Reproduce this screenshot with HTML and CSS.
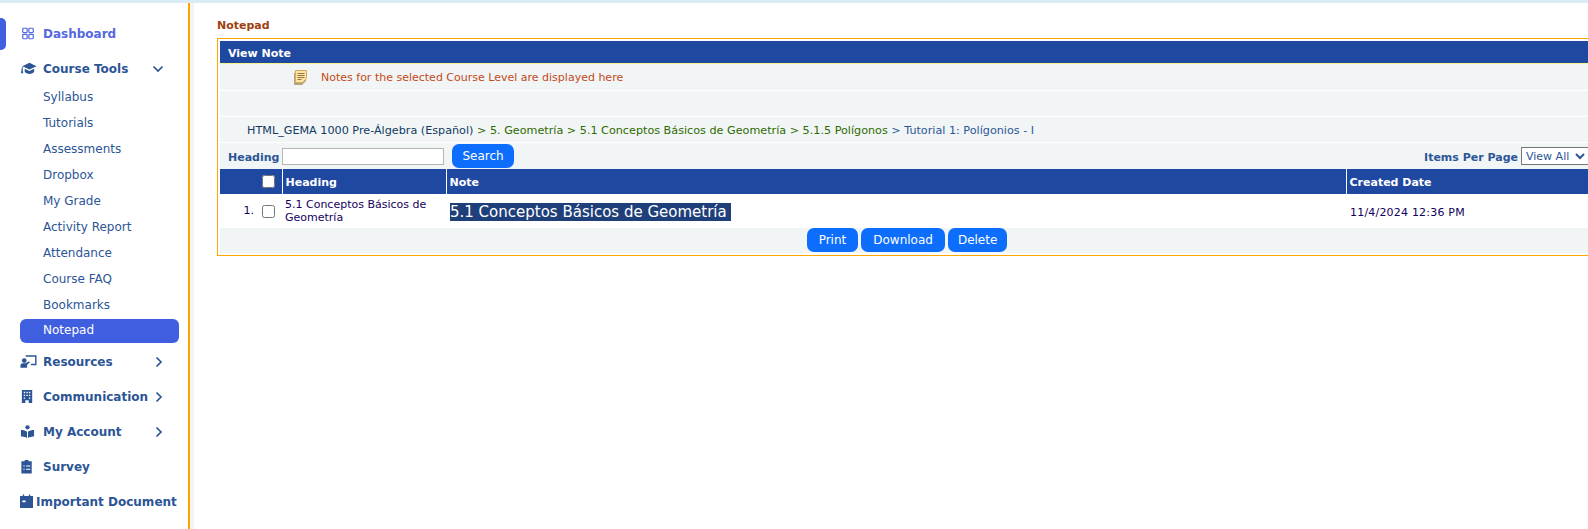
FILE: index.html
```html
<!DOCTYPE html>
<html lang="en">
<head>
  <meta charset="UTF-8">
  <meta name="viewport" content="width=device-width, initial-scale=1.0">
  <title>Notepad</title>
  <link rel="stylesheet" href="styles.css">
</head>
<body>
  <div class="top-strip"></div>
  <div class="layout">
    <nav class="sidebar">
      <span class="active-tab"></span>
      <a class="nav-item nav-dashboard">
        <svg class="nav-icon" viewBox="0 0 16 16"><g fill="none" stroke="#5468e0" stroke-width="1.4"><rect x="2" y="2" width="5" height="5" rx="1"/><rect x="9" y="2" width="5" height="5" rx="1"/><rect x="2" y="9" width="5" height="5" rx="1"/><rect x="9" y="9" width="5" height="5" rx="1"/></g></svg>
        <span>Dashboard</span>
      </a>
      <a class="nav-item nav-tools">
        <svg class="nav-icon cap-icon" viewBox="0 0 18 15"><path d="M10 1.500 17.500 5 10 8.500 3.800 5.600C3 6 2.700 6.700 2.600 7.500c.4.200.5.700.2 1l.6 4H1l.7-4c-.3-.3-.3-.8.100-1 .1-1.100.5-2 1.200-2.500L2.500 5z M5 7.800l5 2.300 5-2.300v3.200c-1 1.500-3 2.300-5 2.300s-4-.8-5-2.300z" fill="#2c5596"/></svg>
        <span>Course Tools</span>
        <svg class="chevron chevron-down" viewBox="0 0 12 12"><path d="M1.500 3.500 6 8l4.500-4.500" fill="none" stroke="#2c5596" stroke-width="1.700"/></svg>
      </a>
      <ul class="sub-menu">
        <li>Syllabus</li>
        <li>Tutorials</li>
        <li>Assessments</li>
        <li>Dropbox</li>
        <li>My Grade</li>
        <li>Activity Report</li>
        <li>Attendance</li>
        <li>Course FAQ</li>
        <li>Bookmarks</li>
        <li class="current">Notepad</li>
      </ul>
      <a class="nav-item nav-tight">
        <svg class="nav-icon wide-icon" viewBox="0 0 18 15"><path d="M6 1h11.500v10.500H11.500V10h4.500V2.500H6z" fill="#2c5596"/><circle cx="4.500" cy="6.500" r="2.500" fill="#2c5596"/><path d="M0.500 14v-2.500C.5 10 1.800 9.300 3 9.300h3l3.500-2 .9 1.300L7.500 11v3z" fill="#2c5596"/></svg>
        <span>Resources</span>
        <svg class="chevron" viewBox="0 0 12 12"><path d="M3.500 1.500 8 6l-4.500 4.500" fill="none" stroke="#2c5596" stroke-width="1.700"/></svg>
      </a>
      <a class="nav-item">
        <svg class="nav-icon" viewBox="0 0 16 16"><path fill-rule="evenodd" d="M2 1h11v14H9.300v-3H5.700v3H2z M4 3v1.500h1.500V3z M6.800 3v1.500h1.500V3z M9.500 3v1.500H11V3z M4 6v1.500h1.500V6z M6.800 6v1.500h1.500V6z M9.500 6v1.500H11V6z M4 9v1.500h1.500V9z M9.500 9v1.500H11V9z" fill="#2c5596"/></svg>
        <span>Communication</span>
        <svg class="chevron" viewBox="0 0 12 12"><path d="M3.500 1.500 8 6l-4.500 4.500" fill="none" stroke="#2c5596" stroke-width="1.700"/></svg>
      </a>
      <a class="nav-item">
        <svg class="nav-icon" viewBox="0 0 16 16"><circle cx="8" cy="3.500" r="2.300" fill="#2c5596"/><path d="M1 6.500c2.500 0 5 .5 6.500 1.800V15C6 13.800 3.500 13.300 1 13.300z M15 6.500c-2.500 0-5 .5-6.500 1.800V15c1.500-1.200 4-1.700 6.500-1.700z" fill="#2c5596"/></svg>
        <span>My Account</span>
        <svg class="chevron" viewBox="0 0 12 12"><path d="M3.500 1.500 8 6l-4.500 4.500" fill="none" stroke="#2c5596" stroke-width="1.700"/></svg>
      </a>
      <a class="nav-item">
        <svg class="nav-icon" viewBox="0 0 16 16"><path fill-rule="evenodd" d="M5 1h4v1.500h3.500v13h-11v-13H5z M3.500 7v1h1.500V7z M6.500 7v1h4.500V7z M3.500 10.500v1h1.500v-1z M6.500 10.500v1h4.500v-1z" fill="#2c5596"/></svg>
        <span>Survey</span>
      </a>
      <a class="nav-item nav-doc">
        <svg class="nav-icon" viewBox="0 0 14 16"><path fill-rule="evenodd" d="M3 .5h1.500V2h5V.5H11V2h3v13H0V2h3z M2.500 7v1.800h3.500V7z" fill="#2c5596"/></svg>
        <span>Important Document</span>
      </a>
    </nav>

    <main class="content">
      <div class="page-title">Notepad</div>
      <section class="panel">
        <div class="panel-head">View Note</div>
        <div class="info-row">
          <svg class="note-icon" viewBox="0 0 14 15"><path d="M1 3h12v8l-4 4H1z" fill="#b3a283"/><path d="M2.500 0.500h11v8l-4 4h-7z" fill="#fce4a8" stroke="#d8ab5c"/><path d="M4.500 3.500h7M4.500 5.500h7M4.500 7.500h7M4.500 9.500h4" stroke="#9a7a3c" stroke-width="1"/></svg>
          <span>Notes for the selected Course Level are displayed here</span>
        </div>
        <div class="blank-row"></div>
        <div class="crumb-row">
          <span class="crumb-root">HTML_GEMA 1000 Pre-Álgebra (Español)</span>
          <span class="crumb-mid">&gt; 5. Geometría &gt; 5.1 Conceptos Básicos de Geometría &gt; 5.1.5 Polígonos</span>
          <span class="crumb-end">&gt; Tutorial 1: Polígonios - I</span>
        </div>
        <div class="filter-row">
          <label class="filter-label">Heading</label>
          <input class="filter-input" type="text">
          <button class="btn btn-search">Search</button>
          <div class="per-page">
            <label class="filter-label">Items Per Page</label>
            <select class="per-select"><option>View All</option></select>
          </div>
        </div>
        <table class="note-table">
          <thead>
            <tr>
              <th class="col-check"><input class="head-check" type="checkbox"></th>
              <th class="col-heading">Heading</th>
              <th class="col-note">Note</th>
              <th>Created Date</th>
            </tr>
          </thead>
          <tbody>
            <tr>
              <td class="col-check"><span class="row-num">1.</span><input class="row-check" type="checkbox"></td>
              <td class="cell-heading">5.1 Conceptos Básicos de Geometría</td>
              <td class="cell-note"><span class="note-text">5.1 Conceptos Básicos de Geometría&nbsp;</span></td>
              <td class="cell-date">11/4/2024 12:36 PM</td>
            </tr>
          </tbody>
        </table>
        <div class="action-row">
          <button class="btn btn-print">Print</button>
          <button class="btn btn-download">Download</button>
          <button class="btn btn-delete">Delete</button>
        </div>
      </section>
    </main>
  </div>
</body>
</html>
```

FILE: styles.css
```css
* {
  box-sizing: border-box;
}
html, body {
  height: 100%;
}
body {
  margin: 0;
  font-family: "DejaVu Sans", Verdana, sans-serif;
  font-size: 11px;
  color: #000;
  background: #fff;
  overflow: hidden;
}
.top-strip {
  height: 3px;
  background: #d9ebf4;
}
.layout {
  display: flex;
  height: 526px;
}

/* Sidebar */
.sidebar {
  position: relative;
  flex: 0 0 194px;
  width: 194px;
  padding: 13px 0 0 20px;
  border-right: 4px solid #f4f4f4;
  box-shadow: inset -2px 0 0 #ffa500;
  font-size: 12px;
  color: #2c5596;
}
.active-tab {
  position: absolute;
  left: 0;
  top: 15px;
  width: 6px;
  height: 32px;
  background: #3f5ee0;
  border-radius: 0 5px 5px 0;
}
.nav-item {
  display: flex;
  align-items: center;
  height: 35px;
  font-weight: 700;
  font-size: 12px;
  color: #2c5596;
}
.nav-dashboard {
  color: #5468e0;
}
.nav-icon {
  flex: 0 0 15px;
  width: 15px;
  height: 15px;
  margin-right: 8px;
}
.cap-icon, .wide-icon {
  flex-basis: 17px;
  width: 17px;
  margin-right: 6px;
}
.nav-doc .nav-icon {
  flex-basis: 13px;
  width: 13px;
  margin-right: 3px;
}
.nav-dashboard .nav-icon {
  width: 14px;
  flex-basis: 14px;
  margin-left: 1px;
}
.chevron {
  position: absolute;
  left: 153px;
  width: 12px;
  height: 12px;
}
.chevron-down {
  left: 152px;
}
.sub-menu {
  list-style: none;
  margin: 0;
  padding: 0;
}
.sub-menu li {
  height: 26px;
  line-height: 26px;
  padding-left: 23px;
  font-size: 12px;
  margin-right: 11px;
}
.sub-menu li:first-child {
  margin-top: -2px;
}
.sub-menu .current {
  height: 24px;
  line-height: 23px;
  margin-top: 1px;
  background: #3f5ee0;
  color: #fff;
  border-radius: 6px;
}
.nav-tight {
  margin-top: 1px;
}

/* Main area */
.content {
  flex: 1;
  min-width: 0;
  padding: 16px 0 0 23px;
  overflow: hidden;
}
.page-title {
  height: 19px;
  line-height: 13px;
  font-weight: 700;
  color: #a0410d;
}
.panel {
  width: 1380px;
  height: 218px;
  padding: 2px;
  border: 1px solid #ffa500;
  background: #fff;
}
.panel-head {
  height: 23px;
  line-height: 25px;
  padding-left: 8px;
  background: #1f48a0;
  border-bottom: 1px solid #f4f48a;
  color: #fff;
  font-weight: 700;
}
.info-row, .blank-row, .crumb-row, .filter-row {
  background: #f1f5f6;
  border-bottom: 1px solid #fff;
}
.info-row {
  display: flex;
  align-items: center;
  height: 27px;
  padding: 1px 0 0 73px;
  color: #c24a1a;
}
.note-icon {
  width: 14px;
  height: 15px;
  margin-right: 14px;
}
.blank-row {
  height: 26px;
}
.crumb-row {
  height: 26px;
  line-height: 27px;
  padding-left: 27px;
  font-size: 11.2px;
}
.crumb-root {
  color: #123a63;
}
.crumb-mid {
  color: #2f6b00;
}
.crumb-end {
  color: #2c5596;
}
.filter-row {
  display: flex;
  align-items: center;
  height: 26px;
  padding: 0 5px 0 8px;
  border-bottom: 0;
}
.filter-label {
  font-weight: 700;
  color: #2c5596;
  padding-top: 2px;
}
.filter-input {
  width: 162px;
  height: 17px;
  margin: 0 8px 0 3px;
  border: 1px solid #b5b5b5;
  background: #fff;
  padding: 0;
}
.per-page {
  margin-left: auto;
  display: flex;
  align-items: center;
}
.per-select {
  width: 68px;
  height: 18px;
  margin-left: 3px;
  border: 1px solid #767676;
  background: #fff;
  color: #2c5596;
  font: 11px "DejaVu Sans", sans-serif;
  padding: 0;
}
.btn {
  height: 24px;
  padding: 0 12px;
  border: 0;
  border-radius: 7px;
  background: #0d6efd;
  color: #fff;
  font: 12px "DejaVu Sans", sans-serif;
}
.btn-search {
  padding: 0 10px;
}
.btn-delete {
  padding: 0 10px;
}
.note-table {
  width: 100%;
  border-collapse: collapse;
  table-layout: fixed;
}
.note-table th {
  height: 25px;
  padding: 2px 3px 0;
  background: #1f48a0;
  color: #fff;
  text-align: left;
  font-weight: 700;
  border-left: 1px solid #fff;
}
.note-table th:first-child {
  border-left: 0;
}
.note-table td {
  height: 34px;
  padding: 0 3px;
  color: #14005c;
  line-height: 13px;
  background: #fff;
}
.note-table .col-check {
  width: 62px;
  padding: 0 7px 0 0;
  text-align: right;
}
.col-heading {
  width: 164px;
}
.col-note {
  width: 900px;
}
.head-check, .row-check {
  width: 13px;
  height: 13px;
  margin: 0;
  vertical-align: middle;
}
.row-num {
  margin-right: 8px;
}
.note-table .cell-note {
  padding: 1px 0 0 4px;
}
.note-table .cell-date {
  padding: 2px 0 0 4px;
  letter-spacing: .2px;
}
.note-text {
  display: inline-block;
  background: #1f3f7a;
  color: #fff;
  font-size: 15px;
  line-height: 18px;
}
.action-row {
  display: flex;
  justify-content: center;
  gap: 3px;
  height: 25px;
  background: #f1f5f6;
}
```
